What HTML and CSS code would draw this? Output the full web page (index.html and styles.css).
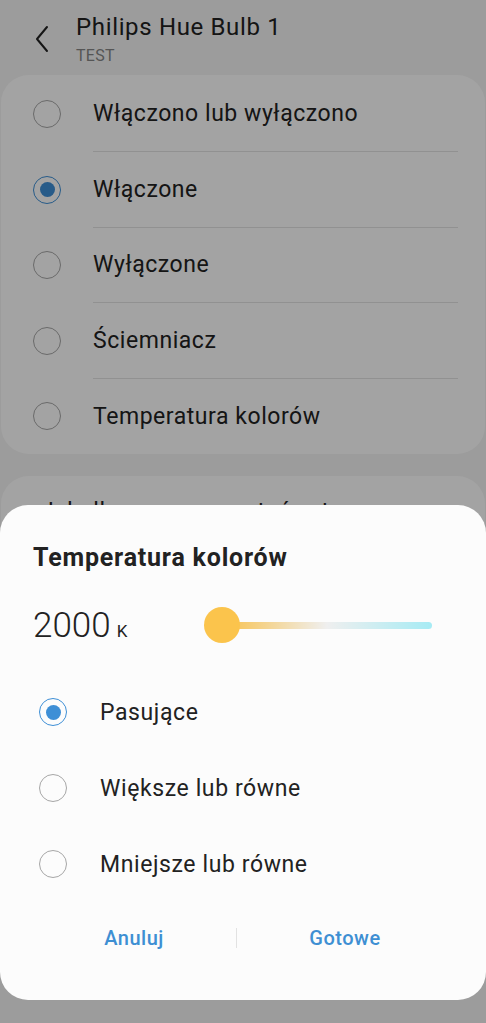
FILE: index.html
```html
<!DOCTYPE html>
<html lang="pl">
<head>
  <meta charset="UTF-8">
  <meta name="viewport" content="width=device-width, initial-scale=1.0">
  <title>Philips Hue Bulb 1</title>
  <link rel="stylesheet" href="styles.css">
</head>
<body>
  <!-- Header -->
  <div class="header">
    <svg class="back" width="16" height="28" viewBox="0 0 16 28">
      <path d="M13 2 L3 14 L13 26" fill="none" stroke="#222" stroke-width="2" stroke-linecap="round" stroke-linejoin="round"/>
    </svg>
    <div class="titles">
      <div class="title">Philips Hue Bulb 1</div>
      <div class="subtitle">TEST</div>
    </div>
  </div>

  <!-- State list -->
  <div class="card">
    <div class="row"><span class="radio"></span><span class="label">Włączono lub wyłączono</span></div>
    <div class="row"><span class="radio checked"></span><span class="label">Włączone</span></div>
    <div class="row"><span class="radio"></span><span class="label">Wyłączone</span></div>
    <div class="row"><span class="radio"></span><span class="label">Ściemniacz</span></div>
    <div class="row"><span class="radio"></span><span class="label">Temperatura kolorów</span></div>
  </div>

  <!-- Second card, mostly hidden by the dialog -->
  <div class="card card-second">
    <div class="question">Jak długo ma pozostać w tym stanie?</div>
  </div>

  <div class="dim"></div>

  <!-- Colour temperature dialog -->
  <div class="dialog">
    <h2>Temperatura kolorów</h2>
    <div class="value-row">
      <div class="value">2000<span class="unit">K</span></div>
      <div class="slider">
        <div class="track"></div>
        <div class="thumb"></div>
      </div>
    </div>
    <div class="options">
      <div class="option"><span class="radio checked"></span><span>Pasujące</span></div>
      <div class="option"><span class="radio"></span><span>Większe lub równe</span></div>
      <div class="option"><span class="radio"></span><span>Mniejsze lub równe</span></div>
    </div>
    <div class="buttons">
      <button>Anuluj</button>
      <span class="sep"></span>
      <button>Gotowe</button>
    </div>
  </div>
</body>
</html>
```

FILE: styles.css
```css
body {
  margin: 0;
  font-family: Roboto, "Noto Sans", sans-serif;
  background-color: #f5f5f5;
  color: #222;
  height: 1023px;
  overflow: hidden;
}
.header {
  display: flex;
  height: 75px;
  box-sizing: border-box;
  padding: 13px 0 0 34px;
}
.back {
  margin-top: 12px;
  margin-right: 26px;
}
.title {
  font-size: 24px;
  line-height: 28px;
  letter-spacing: 0.65px;
}
.subtitle {
  margin-top: 5px;
  font-size: 16px;
  line-height: 20px;
  letter-spacing: 0.3px;
  color: #858585;
}
.card {
  margin: 0 1px;
  background: #fff;
  border-radius: 28px;
  padding: 1.5px 27px 0 32px;
}
.row {
  display: flex;
  align-items: center;
  height: 75.5px;
}
.row:last-child {
  height: 75px;
}
.row .label {
  flex: 1;
  display: flex;
  align-items: center;
  align-self: stretch;
  margin-left: 32px;
  font-size: 23px;
  letter-spacing: 0.55px;
  border-bottom: 1px solid #e3e3e3;
}
.row:last-child .label {
  border-bottom: none;
}
.radio {
  width: 28px;
  height: 28px;
  box-sizing: border-box;
  border: 1.5px solid #a6a6a6;
  border-radius: 50%;
  display: flex;
  align-items: center;
  justify-content: center;
  flex-shrink: 0;
}
.radio.checked {
  border-color: #3e8fd6;
}
.radio.checked::after {
  content: "";
  width: 15px;
  height: 15px;
  border-radius: 50%;
  background: #3e8fd6;
}
.card-second {
  margin-top: 22px;
  padding: 22px 40px 40px 40px;
}
.question {
  height: 8px;
  overflow: hidden;
  font-size: 23px;
  line-height: 27px;
  letter-spacing: 0.55px;
}
.dim {
  position: fixed;
  inset: 0;
  background: rgba(0, 0, 0, 0.36);
}
.dialog {
  position: absolute;
  top: 505px;
  left: 0;
  width: 486px;
  height: 495px;
  box-sizing: border-box;
  background: #fcfcfc;
  border-radius: 28px;
  padding: 38px 33px 0 33px;
}
.dialog h2 {
  margin: 0;
  font-size: 25px;
  line-height: 30px;
  font-weight: 700;
  letter-spacing: 0.8px;
  color: #222;
}
.value-row {
  display: flex;
  align-items: center;
  height: 60px;
  margin-top: 22px;
}
.value {
  font-size: 35px;
  font-weight: 300;
  color: #222;
}
.unit {
  font-size: 17px;
  font-weight: 400;
  margin-left: 6px;
}
.slider {
  position: relative;
  width: 228px;
  height: 36px;
  margin-left: auto;
  margin-right: 21px;
  display: flex;
  align-items: center;
}
.track {
  flex: 1;
  margin-left: 18px;
  height: 7px;
  border-radius: 4px;
  background: linear-gradient(to right, #f8c14c, #efefef 50%, #a6ebf4);
}
.thumb {
  position: absolute;
  left: 0;
  top: 0;
  width: 36px;
  height: 36px;
  border-radius: 50%;
  background: #fbc44c;
}
.options {
  margin-top: 19px;
}
.option {
  display: flex;
  align-items: center;
  height: 76px;
  padding-left: 6px;
  font-size: 23px;
  letter-spacing: 0.6px;
}
.option .radio {
  margin-right: 33px;
}
.buttons {
  display: grid;
  grid-template-columns: 204px 1px 1fr;
  align-items: center;
  height: 40px;
  margin: 16px 0 0 -1px;
}
.buttons button {
  border: none;
  background: none;
  font-family: inherit;
  font-size: 20px;
  font-weight: 500;
  letter-spacing: 0.5px;
  color: #3e8fd3;
  padding: 0;
}
.sep {
  width: 1px;
  height: 20px;
  background: #e2e2e2;
}
```
